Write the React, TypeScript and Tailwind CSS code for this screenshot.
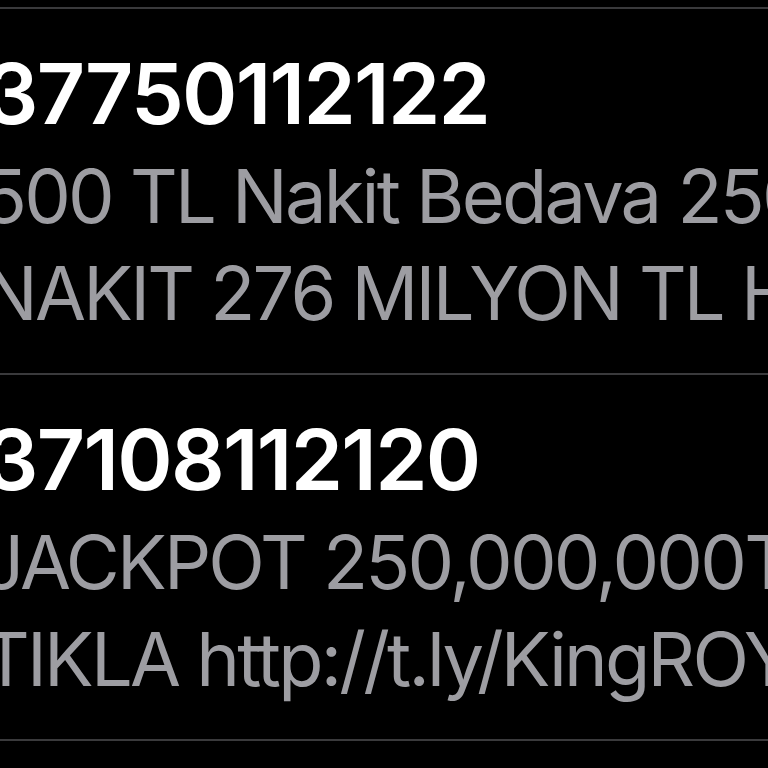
const THREADS = [
  {
    id: "a",
    sender: "37750112122",
    lines: ["500 TL Nakit Bedava 250 Freespin", "NAKIT 276 MILYON TL HEDIYE"],
  },
  {
    id: "b",
    sender: "37108112120",
    lines: ["JACKPOT 250,000,000TL", "TIKLA http://t.ly/KingROYAL"],
  },
];

export default function App() {
  return (
    <div
      className="h-[768px] w-[768px] overflow-hidden bg-black pt-[7px]"
      style={{ fontFamily: "Inter, 'Liberation Sans', sans-serif" }}
    >
      {THREADS.map((t) => (
        <div key={t.id} className="border-t-2 border-[#3a3a3c] pt-[35px] pb-[31px]">
          <div className="-ml-[15px] whitespace-nowrap text-[84px] font-semibold leading-[100px] tracking-[-1.7px] text-white">
            {t.sender}
          </div>
          <div className="mt-[4px]">
            {t.lines.map((l) => (
              <div
                key={l}
                className="-ml-[18px] whitespace-nowrap text-[74px] leading-[97px] tracking-[-2.8px] text-[#9d9da2]"
              >
                {l}
              </div>
            ))}
          </div>
        </div>
      ))}
      <div className="border-t-2 border-[#3a3a3c]" />
    </div>
  );
}
